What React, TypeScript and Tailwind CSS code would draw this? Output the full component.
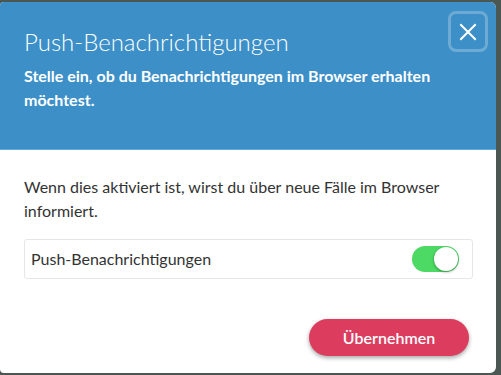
import React, { useState } from 'react';

export default function App() {
  const [enabled, setEnabled] = useState(true);

  return (
    <div className="w-[501px] h-[375px] bg-[#4a5752] pt-[2px] pr-[5px] pb-[2px] font-['Lato','Noto_Sans',sans-serif]">
      <div className="w-[496px] h-[371px] bg-white rounded-r-[6px] rounded-l-[4px] overflow-hidden flex flex-col">
        {/* Header */}
        <div className="relative h-[148px] bg-[#3c8fc7] border-b border-[#63a9d9] px-6 pt-[24px]">
          <h1 className="text-[24px] font-light text-white leading-[32px]">Push-Benachrichtigungen</h1>
          <p className="mt-[6px] text-[16px] font-bold text-white leading-[24px] pr-[40px]">
            Stelle ein, ob du Benachrichtigungen im Browser erhalten möchtest.
          </p>
          <button className="absolute top-[9px] right-[8px] w-[40px] h-[41px] rounded-[8px] border-[3px] border-white/25 flex items-center justify-center">
            <svg width="18" height="18" viewBox="0 0 18 18" fill="none" stroke="white" strokeWidth="2" strokeLinecap="square">
              <path d="M2 2L16 16M16 2L2 16" />
            </svg>
          </button>
        </div>

        {/* Body */}
        <div className="flex-1 flex flex-col px-6 pt-[25px]">
          <p className="text-[16px] text-[#333] leading-[24px] pr-[20px]">
            Wenn dies aktiviert ist, wirst du über neue Fälle im Browser informiert.
          </p>
          <div className="mt-[16px] mr-[-1px] h-[40px] border border-[#e6e6e6] rounded-[3px] flex items-center justify-between pl-[6px] pr-[13px]">
            <span className="text-[16px] text-[#333]">Push-Benachrichtigungen</span>
            <button
              onClick={() => setEnabled(!enabled)}
              className={`w-[47px] h-[26px] rounded-full flex items-center px-[1px] ${enabled ? 'bg-[#4cd964] justify-end' : 'bg-[#e5e5e5] justify-start'}`}
            >
              <span className="w-[24px] h-[24px] rounded-full bg-white shadow-[0_1px_3px_rgba(0,0,0,0.35)]" />
            </button>
          </div>
          <div className="flex justify-end mt-[40px] pr-[3px]">
            <button className="w-[160px] h-[37px] rounded-full bg-[#dc3d5f] text-white text-[16px] font-semibold shadow-[0_2px_4px_rgba(0,0,0,0.35)]">
              Übernehmen
            </button>
          </div>
        </div>
      </div>
    </div>
  );
}
